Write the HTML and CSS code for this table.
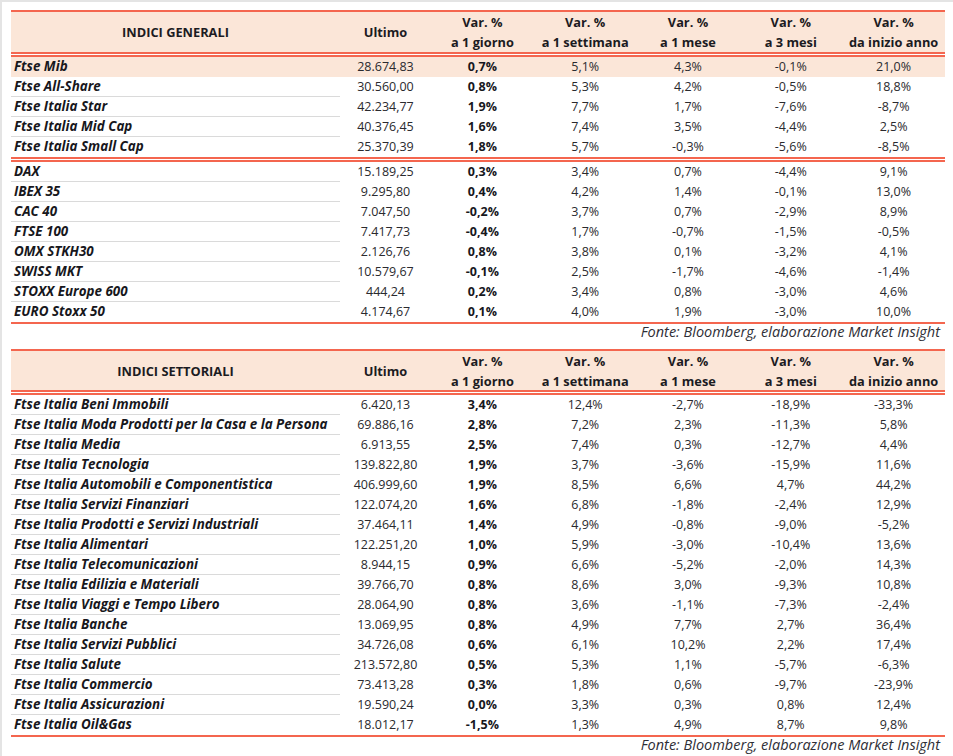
FILE: index.html
```html
<!DOCTYPE html>
<html lang="it">
<head>
<meta charset="utf-8">
<title>Indici</title>
<link rel="stylesheet" href="styles.css">
</head>
<body>
<div class="page">
  <section class="tbl">
    <div class="thead">
      <div class="hc name">INDICI GENERALI</div>
      <div class="hc">Ultimo</div>
      <div class="hc"><span>Var. %</span><span>a 1 giorno</span></div>
      <div class="hc"><span>Var. %</span><span>a 1 settimana</span></div>
      <div class="hc"><span>Var. %</span><span>a 1 mese</span></div>
      <div class="hc"><span>Var. %</span><span>a 3 mesi</span></div>
      <div class="hc"><span>Var. %</span><span>da inizio anno</span></div>
    </div>
    <div class="dbl"></div>
    <div class="group">
      <div class="row hl"><div class="c name">Ftse Mib</div><div class="c">28.674,83</div><div class="c b">0,7%</div><div class="c">5,1%</div><div class="c">4,3%</div><div class="c">-0,1%</div><div class="c">21,0%</div></div>
      <div class="row"><div class="c name">Ftse All-Share</div><div class="c">30.560,00</div><div class="c b">0,8%</div><div class="c">5,3%</div><div class="c">4,2%</div><div class="c">-0,5%</div><div class="c">18,8%</div></div>
      <div class="row"><div class="c name">Ftse Italia Star</div><div class="c">42.234,77</div><div class="c b">1,9%</div><div class="c">7,7%</div><div class="c">1,7%</div><div class="c">-7,6%</div><div class="c">-8,7%</div></div>
      <div class="row"><div class="c name">Ftse Italia Mid Cap</div><div class="c">40.376,45</div><div class="c b">1,6%</div><div class="c">7,4%</div><div class="c">3,5%</div><div class="c">-4,4%</div><div class="c">2,5%</div></div>
      <div class="row"><div class="c name">Ftse Italia Small Cap</div><div class="c">25.370,39</div><div class="c b">1,8%</div><div class="c">5,7%</div><div class="c">-0,3%</div><div class="c">-5,6%</div><div class="c">-8,5%</div></div>
    </div>
    <div class="dbl"></div>
    <div class="group">
      <div class="row"><div class="c name">DAX</div><div class="c">15.189,25</div><div class="c b">0,3%</div><div class="c">3,4%</div><div class="c">0,7%</div><div class="c">-4,4%</div><div class="c">9,1%</div></div>
      <div class="row"><div class="c name">IBEX 35</div><div class="c">9.295,80</div><div class="c b">0,4%</div><div class="c">4,2%</div><div class="c">1,4%</div><div class="c">-0,1%</div><div class="c">13,0%</div></div>
      <div class="row"><div class="c name">CAC 40</div><div class="c">7.047,50</div><div class="c b">-0,2%</div><div class="c">3,7%</div><div class="c">0,7%</div><div class="c">-2,9%</div><div class="c">8,9%</div></div>
      <div class="row"><div class="c name">FTSE 100</div><div class="c">7.417,73</div><div class="c b">-0,4%</div><div class="c">1,7%</div><div class="c">-0,7%</div><div class="c">-1,5%</div><div class="c">-0,5%</div></div>
      <div class="row"><div class="c name">OMX STKH30</div><div class="c">2.126,76</div><div class="c b">0,8%</div><div class="c">3,8%</div><div class="c">0,1%</div><div class="c">-3,2%</div><div class="c">4,1%</div></div>
      <div class="row"><div class="c name">SWISS MKT</div><div class="c">10.579,67</div><div class="c b">-0,1%</div><div class="c">2,5%</div><div class="c">-1,7%</div><div class="c">-4,6%</div><div class="c">-1,4%</div></div>
      <div class="row"><div class="c name">STOXX Europe 600</div><div class="c">444,24</div><div class="c b">0,2%</div><div class="c">3,4%</div><div class="c">0,8%</div><div class="c">-3,0%</div><div class="c">4,6%</div></div>
      <div class="row"><div class="c name">EURO Stoxx 50</div><div class="c">4.174,67</div><div class="c b">0,1%</div><div class="c">4,0%</div><div class="c">1,9%</div><div class="c">-3,0%</div><div class="c">10,0%</div></div>
    </div>
    <div class="end"></div>
  </section>
  <p class="src">Fonte: Bloomberg, elaborazione Market Insight</p>

  <section class="tbl">
    <div class="thead t2">
      <div class="hc name">INDICI SETTORIALI</div>
      <div class="hc">Ultimo</div>
      <div class="hc"><span>Var. %</span><span>a 1 giorno</span></div>
      <div class="hc"><span>Var. %</span><span>a 1 settimana</span></div>
      <div class="hc"><span>Var. %</span><span>a 1 mese</span></div>
      <div class="hc"><span>Var. %</span><span>a 3 mesi</span></div>
      <div class="hc"><span>Var. %</span><span>da inizio anno</span></div>
    </div>
    <div class="dbl"></div>
    <div class="group">
      <div class="row"><div class="c name">Ftse Italia Beni Immobili</div><div class="c">6.420,13</div><div class="c b">3,4%</div><div class="c">12,4%</div><div class="c">-2,7%</div><div class="c">-18,9%</div><div class="c">-33,3%</div></div>
      <div class="row"><div class="c name">Ftse Italia Moda Prodotti per la Casa e la Persona</div><div class="c">69.886,16</div><div class="c b">2,8%</div><div class="c">7,2%</div><div class="c">2,3%</div><div class="c">-11,3%</div><div class="c">5,8%</div></div>
      <div class="row"><div class="c name">Ftse Italia Media</div><div class="c">6.913,55</div><div class="c b">2,5%</div><div class="c">7,4%</div><div class="c">0,3%</div><div class="c">-12,7%</div><div class="c">4,4%</div></div>
      <div class="row"><div class="c name">Ftse Italia Tecnologia</div><div class="c">139.822,80</div><div class="c b">1,9%</div><div class="c">3,7%</div><div class="c">-3,6%</div><div class="c">-15,9%</div><div class="c">11,6%</div></div>
      <div class="row"><div class="c name">Ftse Italia Automobili e Componentistica</div><div class="c">406.999,60</div><div class="c b">1,9%</div><div class="c">8,5%</div><div class="c">6,6%</div><div class="c">4,7%</div><div class="c">44,2%</div></div>
      <div class="row"><div class="c name">Ftse Italia Servizi Finanziari</div><div class="c">122.074,20</div><div class="c b">1,6%</div><div class="c">6,8%</div><div class="c">-1,8%</div><div class="c">-2,4%</div><div class="c">12,9%</div></div>
      <div class="row"><div class="c name">Ftse Italia Prodotti e Servizi Industriali</div><div class="c">37.464,11</div><div class="c b">1,4%</div><div class="c">4,9%</div><div class="c">-0,8%</div><div class="c">-9,0%</div><div class="c">-5,2%</div></div>
      <div class="row"><div class="c name">Ftse Italia Alimentari</div><div class="c">122.251,20</div><div class="c b">1,0%</div><div class="c">5,9%</div><div class="c">-3,0%</div><div class="c">-10,4%</div><div class="c">13,6%</div></div>
      <div class="row"><div class="c name">Ftse Italia Telecomunicazioni</div><div class="c">8.944,15</div><div class="c b">0,9%</div><div class="c">6,6%</div><div class="c">-5,2%</div><div class="c">-2,0%</div><div class="c">14,3%</div></div>
      <div class="row"><div class="c name">Ftse Italia Edilizia e Materiali</div><div class="c">39.766,70</div><div class="c b">0,8%</div><div class="c">8,6%</div><div class="c">3,0%</div><div class="c">-9,3%</div><div class="c">10,8%</div></div>
      <div class="row"><div class="c name">Ftse Italia Viaggi e Tempo Libero</div><div class="c">28.064,90</div><div class="c b">0,8%</div><div class="c">3,6%</div><div class="c">-1,1%</div><div class="c">-7,3%</div><div class="c">-2,4%</div></div>
      <div class="row"><div class="c name">Ftse Italia Banche</div><div class="c">13.069,95</div><div class="c b">0,8%</div><div class="c">4,9%</div><div class="c">7,7%</div><div class="c">2,7%</div><div class="c">36,4%</div></div>
      <div class="row"><div class="c name">Ftse Italia Servizi Pubblici</div><div class="c">34.726,08</div><div class="c b">0,6%</div><div class="c">6,1%</div><div class="c">10,2%</div><div class="c">2,2%</div><div class="c">17,4%</div></div>
      <div class="row"><div class="c name">Ftse Italia Salute</div><div class="c">213.572,80</div><div class="c b">0,5%</div><div class="c">5,3%</div><div class="c">1,1%</div><div class="c">-5,7%</div><div class="c">-6,3%</div></div>
      <div class="row"><div class="c name">Ftse Italia Commercio</div><div class="c">73.413,28</div><div class="c b">0,3%</div><div class="c">1,8%</div><div class="c">0,6%</div><div class="c">-9,7%</div><div class="c">-23,9%</div></div>
      <div class="row"><div class="c name">Ftse Italia Assicurazioni</div><div class="c">19.590,24</div><div class="c b">0,0%</div><div class="c">3,3%</div><div class="c">0,3%</div><div class="c">0,8%</div><div class="c">12,4%</div></div>
      <div class="row"><div class="c name">Ftse Italia Oil&amp;Gas</div><div class="c">18.012,17</div><div class="c b">-1,5%</div><div class="c">1,3%</div><div class="c">4,9%</div><div class="c">8,7%</div><div class="c">9,8%</div></div>
    </div>
    <div class="end"></div>
  </section>
  <p class="src">Fonte: Bloomberg, elaborazione Market Insight</p>
</div>
</body>
</html>
```
FILE: styles.css
```css
html, body {
  margin: 0;
  padding: 0;
  background: #ffffff;
}

.page {
  box-sizing: border-box;
  width: 953px;
  height: 756px;
  border-top: 2px solid #e4e4e4;
  border-left: 2px solid #e4e4e4;
  padding: 8px 0 0 9px;
  font-family: "Open Sans", "Noto Sans", sans-serif;
  color: #1b1b1f;
  overflow: hidden;
}

.tbl {
  width: 934px;
}

.thead,
.row {
  display: grid;
  grid-template-columns: 329px 91px repeat(5, 1fr);
}

.thead {
  height: 40px;
  border-top: 2px solid #f4664f;
  background: #fbe6d8;
}

.thead.t2 {
  height: 39px;
}

.hc {
  display: flex;
  flex-direction: column;
  align-items: center;
  justify-content: center;
  font-weight: 700;
  font-size: 12.8px;
  line-height: 20px;
  white-space: nowrap;
  color: #1b1b22;
}

.dbl {
  box-sizing: border-box;
  height: 5px;
  border-top: 2px solid #f4664f;
  border-bottom: 2px solid #f4664f;
  background: #ffffff;
}

.end {
  height: 2px;
  background: #f4664f;
}

.row {
  height: 20px;
}

.row.hl {
  background: #fbe6d8;
}

.c {
  font-size: 12.5px;
  line-height: 20px;
  text-align: center;
  white-space: nowrap;
  color: #2a2a2e;
}

.c.b {
  font-weight: 700;
  color: #17171c;
}

.c.name {
  box-sizing: border-box;
  text-align: left;
  padding-left: 3px;
  font-weight: 700;
  font-style: italic;
  font-size: 13.4px;
  color: #17171c;
  border-bottom: 1px solid #dadada;
  line-height: 19px;
}

.row.hl .c.name,
.row:last-child .c.name {
  border-bottom-color: transparent;
}

.src {
  box-sizing: border-box;
  width: 934px;
  margin: 0 0 9px 0;
  padding-right: 5px;
  text-align: right;
  font-style: italic;
  font-size: 14.5px;
  line-height: 16px;
  color: #2e2e36;
}
```
